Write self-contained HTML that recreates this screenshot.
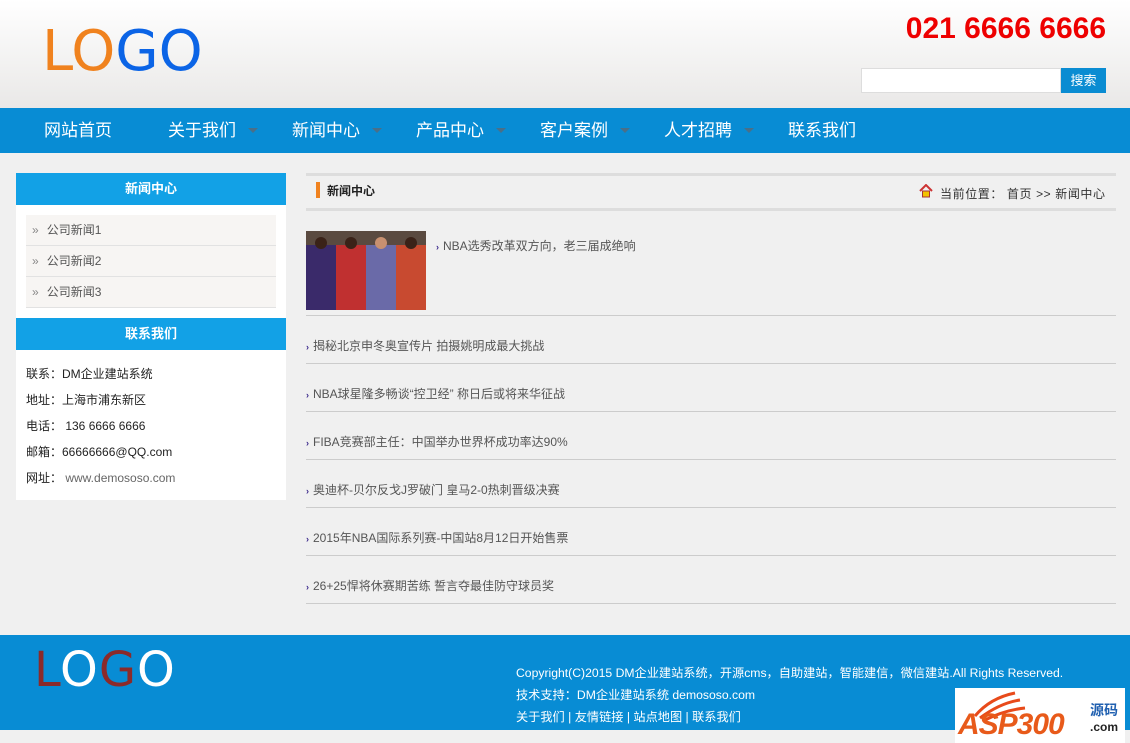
<!DOCTYPE html>
<html><head><meta charset="utf-8"><style>
*{margin:0;padding:0;box-sizing:border-box}
body{width:1130px;height:743px;overflow:hidden;background:#f0f0f0;font-family:"Liberation Sans","Noto Sans CJK SC",sans-serif;font-size:12px;color:#555;position:relative}
.a{position:absolute}
#hd{left:0;top:0;width:1130px;height:108px;background:linear-gradient(#fff,#e9e8e7)}
#logo{left:42px;top:22px;font-size:56px;font-family:"DejaVu Sans","Liberation Sans",sans-serif;letter-spacing:0px;line-height:60px}
#tel{right:24px;top:12px;font-size:30px;font-weight:bold;color:#e00;font-family:"Liberation Sans",sans-serif}
#sin{left:861px;top:68px;width:200px;height:25px;background:#fff;border:1px solid #ddd}
#sbt{left:1061px;top:68px;width:45px;height:25px;background:#0a8cd2;color:#fff;font-size:13px;text-align:center;line-height:25px}
#nav{left:0;top:108px;width:1130px;height:45px;background:#088cd4}
.ni{position:absolute;top:0;line-height:45px;color:#fff;font-size:17px}
.ar{position:absolute;top:20px;border:5px solid transparent;border-top:5px solid #4a6f88;border-bottom:0}
.sh{background:#12a1e6;color:#fff;font-weight:bold;font-size:13px;text-align:center;line-height:32px;width:270px;height:32px;left:16px}
.li{left:26px;width:250px;height:31px;background:#f7f5f3;border-bottom:1px solid #e2e2e2;line-height:30px;color:#555;font-size:12px;padding-left:6px}
.li span{color:#888;margin-right:8px}
.ct{left:26px;font-size:12px;color:#222}
.nl{left:306px;width:810px;height:1px;background:#ccc}
.nt{left:306px;font-size:12px;color:#555}
.nt b{color:#3c2a8c;font-size:9px;margin-right:4px;font-weight:bold}
#ft{left:0;top:635px;width:1130px;height:95px;background:#088cd4}
.fl{color:#fff;font-size:12.2px;left:516px}
</style></head><body>
<div class="a" id="hd"></div>
<div class="a" id="logo"><span style="color:#f0821e">L</span><span style="color:#f0821e">O</span><span style="color:#0b64e6">GO</span></div>
<div class="a" id="tel">021 6666 6666</div>
<div class="a" id="sin"></div><div class="a" id="sbt">搜索</div>
<div class="a" id="nav">
<span class="ni" style="left:44px">网站首页</span>
<span class="ni" style="left:168px">关于我们</span><span class="ar" style="left:248px"></span>
<span class="ni" style="left:292px">新闻中心</span><span class="ar" style="left:372px"></span>
<span class="ni" style="left:416px">产品中心</span><span class="ar" style="left:496px"></span>
<span class="ni" style="left:540px">客户案例</span><span class="ar" style="left:620px"></span>
<span class="ni" style="left:664px">人才招聘</span><span class="ar" style="left:744px"></span>
<span class="ni" style="left:788px">联系我们</span>
</div>
<div class="a" style="left:16px;top:173px;width:270px;height:327px;background:#fff"></div>
<div class="a sh" style="top:173px">新闻中心</div>
<div class="a li" style="top:215px"><span>»</span>公司新闻1</div>
<div class="a li" style="top:246px"><span>»</span>公司新闻2</div>
<div class="a li" style="top:277px"><span>»</span>公司新闻3</div>
<div class="a sh" style="top:318px">联系我们</div>
<div class="a ct" style="top:365px">联系：DM企业建站系统</div>
<div class="a ct" style="top:391px">地址：上海市浦东新区</div>
<div class="a ct" style="top:417px">电话： 136 6666 6666</div>
<div class="a ct" style="top:443px">邮箱：66666666@QQ.com</div>
<div class="a ct" style="top:469px">网址： <span style="color:#666">www.demososo.com</span></div>
<div class="a" style="left:306px;top:173px;width:810px;height:3px;background:#ddd"></div>
<div class="a" style="left:306px;top:208px;width:810px;height:3px;background:#ddd"></div>
<div class="a" style="left:316px;top:182px;width:4px;height:16px;background:#f0821e"></div>
<div class="a" style="left:327px;top:182px;font-weight:bold;color:#222;font-size:12px">新闻中心</div>
<svg class="a" style="left:919px;top:184px" width="14" height="14" viewBox="0 0 14 14"><path d="M1 7L7 1L13 7" stroke="#c33" stroke-width="2" fill="none"/><rect x="3.5" y="7" width="7" height="6" fill="#f2c200" stroke="#a33"/></svg>
<div class="a" style="left:940px;top:185px;color:#333;letter-spacing:0.6px">当前位置： 首页 &gt;&gt; 新闻中心</div>
<svg class="a" style="left:306px;top:231px" width="120" height="79"><rect width="120" height="79" fill="#8a7c78"/><rect width="30" height="79" fill="#3a2a6a"/><rect x="30" width="30" height="79" fill="#c03030"/><rect x="60" width="30" height="79" fill="#6a6aa8"/><rect x="90" width="30" height="79" fill="#c84a30"/><rect y="0" width="120" height="14" fill="#5a4a40"/><circle cx="15" cy="12" r="6" fill="#3a2218"/><circle cx="45" cy="12" r="6" fill="#3a2218"/><circle cx="75" cy="12" r="6" fill="#c89070"/><circle cx="105" cy="12" r="6" fill="#3a2218"/></svg>
<div class="a nt" style="left:436px;top:237px"><b>›</b>NBA选秀改革双方向，老三届成绝响</div>
<div class="a nl" style="top:315px"></div>
<div class="a nt" style="top:337px"><b>›</b>揭秘北京申冬奥宣传片 拍摄姚明成最大挑战</div>
<div class="a nl" style="top:363px"></div>
<div class="a nt" style="top:385px"><b>›</b>NBA球星隆多畅谈“控卫经” 称日后或将来华征战</div>
<div class="a nl" style="top:411px"></div>
<div class="a nt" style="top:433px"><b>›</b>FIBA竞赛部主任：中国举办世界杯成功率达90%</div>
<div class="a nl" style="top:459px"></div>
<div class="a nt" style="top:481px"><b>›</b>奥迪杯-贝尔反戈J罗破门 皇马2-0热刺晋级决赛</div>
<div class="a nl" style="top:507px"></div>
<div class="a nt" style="top:529px"><b>›</b>2015年NBA国际系列赛-中国站8月12日开始售票</div>
<div class="a nl" style="top:555px"></div>
<div class="a nt" style="top:577px"><b>›</b>26+25悍将休赛期苦练 誓言夺最佳防守球员奖</div>
<div class="a nl" style="top:603px"></div>
<div class="a" id="ft"></div>
<div class="a" style="left:34px;top:644px;font-size:48px;font-family:'DejaVu Sans',sans-serif;line-height:52px;letter-spacing:1px"><span style="color:#8b2a2a">L</span><span style="color:#fff">O</span><span style="color:#8b2a2a">G</span><span style="color:#fff">O</span></div>
<div class="a fl" style="top:663px">Copyright(C)2015 DM企业建站系统，开源cms，自助建站，智能建信，微信建站.All Rights Reserved.</div>
<div class="a fl" style="top:685px">技术支持：DM企业建站系统 demososo.com</div>
<div class="a fl" style="top:707px">关于我们 | 友情链接 | 站点地图 | 联系我们</div>
<div class="a" style="left:955px;top:688px;width:170px;height:55px;background:#fff"></div>
<svg class="a" style="left:955px;top:688px" width="170" height="55"><path d="M20 28Q35 10 60 5M25 30Q45 15 65 12M30 32Q50 22 70 20" stroke="#e84a1a" stroke-width="3" fill="none"/></svg>
<div class="a" style="left:958px;top:708px;font-size:30px;font-weight:bold;font-style:italic;color:#e85a1a;font-family:'Liberation Sans',sans-serif;letter-spacing:-1px">ASP300</div>
<div class="a" style="left:1090px;top:700px;font-size:14px;font-weight:bold;color:#2060b0">源码</div>
<div class="a" style="left:1090px;top:720px;font-size:12px;font-weight:bold;color:#222">.com</div>
</body></html>
